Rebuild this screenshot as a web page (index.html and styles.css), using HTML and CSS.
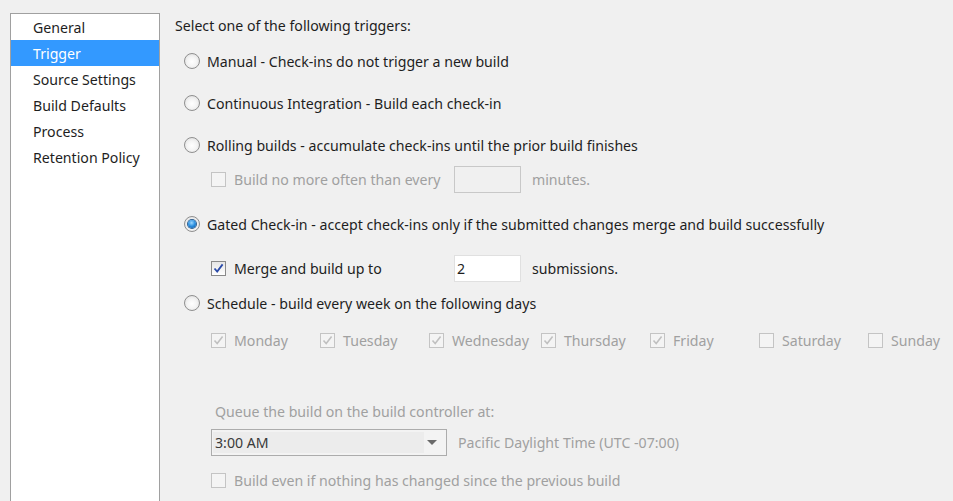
FILE: index.html
```html
<!DOCTYPE html>
<html>
<head>
<meta charset="utf-8">
<link rel="stylesheet" href="styles.css">
</head>
<body>
<div class="page">
  <nav class="nav">
    <div class="nav-item">General</div>
    <div class="nav-item selected">Trigger</div>
    <div class="nav-item">Source Settings</div>
    <div class="nav-item">Build Defaults</div>
    <div class="nav-item">Process</div>
    <div class="nav-item">Retention Policy</div>
  </nav>
  <main class="main">
    <div class="row heading">Select one of the following triggers:</div>

    <div class="row radio-row r1"><span class="radio"></span><span>Manual - Check-ins do not trigger a new build</span></div>
    <div class="row radio-row r2"><span class="radio"></span><span>Continuous Integration - Build each check-in</span></div>
    <div class="row radio-row r3"><span class="radio"></span><span>Rolling builds - accumulate check-ins until the prior build finishes</span></div>
    <div class="row sub-row s1 disabled">
      <span class="check"></span><span class="sub-label">Build no more often than every</span>
      <span class="textbox"></span><span class="after">minutes.</span>
    </div>

    <div class="row radio-row r4"><span class="radio on"></span><span>Gated Check-in - accept check-ins only if the submitted changes merge and build successfully</span></div>
    <div class="row sub-row s2">
      <span class="check checked"><svg viewBox="0 0 15 15" width="15" height="15"><path d="M3.5 7.5 L6.2 10.6 L11.6 3.4" fill="none" stroke="#2a4aa8" stroke-width="1.8"/></svg></span><span class="sub-label">Merge and build up to</span>
      <span class="textbox active">2</span><span class="after">submissions.</span>
    </div>

    <div class="row radio-row r5"><span class="radio"></span><span>Schedule - build every week on the following days</span></div>
    <div class="row days disabled">
      <div class="day"><span class="check"><svg viewBox="0 0 15 15" width="15" height="15"><path d="M3.5 7.5 L6.2 10.6 L11.6 3.4" fill="none" stroke="#c0c0c0" stroke-width="1.6"/></svg></span><span>Monday</span></div>
      <div class="day"><span class="check"><svg viewBox="0 0 15 15" width="15" height="15"><path d="M3.5 7.5 L6.2 10.6 L11.6 3.4" fill="none" stroke="#c0c0c0" stroke-width="1.6"/></svg></span><span>Tuesday</span></div>
      <div class="day"><span class="check"><svg viewBox="0 0 15 15" width="15" height="15"><path d="M3.5 7.5 L6.2 10.6 L11.6 3.4" fill="none" stroke="#c0c0c0" stroke-width="1.6"/></svg></span><span>Wednesday</span></div>
      <div class="day"><span class="check"><svg viewBox="0 0 15 15" width="15" height="15"><path d="M3.5 7.5 L6.2 10.6 L11.6 3.4" fill="none" stroke="#c0c0c0" stroke-width="1.6"/></svg></span><span>Thursday</span></div>
      <div class="day"><span class="check"><svg viewBox="0 0 15 15" width="15" height="15"><path d="M3.5 7.5 L6.2 10.6 L11.6 3.4" fill="none" stroke="#c0c0c0" stroke-width="1.6"/></svg></span><span>Friday</span></div>
      <div class="day"><span class="check"></span><span>Saturday</span></div>
      <div class="day"><span class="check"></span><span>Sunday</span></div>
    </div>

    <div class="row queue disabled">Queue the build on the build controller at:</div>
    <div class="row time-row disabled">
      <div class="combo"><span class="combo-text">3:00 AM</span><span class="combo-arrow"></span></div>
      <span class="tz">Pacific Daylight Time (UTC -07:00)</span>
    </div>
    <div class="row sub-row s3 disabled"><span class="check"></span><span>Build even if nothing has changed since the previous build</span></div>
  </main>
</div>
</body>
</html>
```

FILE: styles.css
```css
html, body {
  margin: 0;
  padding: 0;
  height: 100%;
  overflow: hidden;
}
body {
  background: #f0f0f0;
  font-family: "Noto Sans", "Open Sans", sans-serif;
  font-size: 14.15px;
  color: #1e1e1e;
}
.page {
  display: flex;
  height: 501px;
}
.nav {
  margin-left: 10px;
  margin-top: 13px;
  width: 148px;
  background: #fff;
  border: 1px solid #a0a0a0;
  border-bottom: none;
  flex: none;
}
.nav-item {
  height: 26px;
  line-height: 28px;
  overflow: hidden;
  padding-left: 22px;
  color: #1e1e1e;
}
.nav-item.selected {
  background: #3399ff;
  color: #fff;
}
.main {
  flex: 1;
  padding-left: 15px;
  padding-top: 15px;
  display: flex;
  flex-direction: column;
}
.row {
  display: flex;
  align-items: center;
  height: 20px;
  white-space: nowrap;
}
.disabled { color: #a0a0a0; }
.radio-row { padding-left: 9px; }
.radio {
  width: 14px;
  height: 14px;
  border: 1px solid #8f8f8f;
  border-radius: 50%;
  background: radial-gradient(circle at 50% 55%, #ffffff 0%, #f4f4f4 45%, #d8d8d8 100%);
  margin-right: 7px;
  position: relative;
  flex: none;
}
.radio.on::after {
  content: "";
  position: absolute;
  left: 3px;
  top: 3px;
  width: 8px;
  height: 8px;
  border-radius: 50%;
  background: radial-gradient(circle at 45% 35%, #9fd8ff 0%, #2a8fe0 50%, #0b4f98 100%);
  box-shadow: 0 0 0 1px #2d5f91;
}
.r1 { margin-top: 16px; }
.r2 { margin-top: 22px; }
.r3 { margin-top: 22px; }
.r4 { margin-top: 22px; }
.r5 { margin-top: 12px; }
.sub-row { padding-left: 36px; }
.s1 { margin-top: 11px; height: 26px; }
.s2 { margin-top: 21px; height: 26px; }
.s3 { margin-top: 14px; }
.check {
  width: 13px;
  height: 13px;
  border: 1px solid #8a8a8a;
  background: linear-gradient(#e6e6e6, #ffffff);
  margin-right: 8px;
  flex: none;
  position: relative;
  display: inline-flex;
}
.check svg { position: absolute; left: -1px; top: -1px; }
.disabled .check { border-color: #c4c4c4; background: #f4f4f4; }
.sub-label { width: 220px; }
.textbox {
  width: 63px;
  height: 25px;
  border: 1px solid #c8c8c8;
  background: #f0f0f0;
  box-sizing: content-box;
  padding-left: 2px;
  line-height: 25px;
  color: #1e1e1e;
}
.textbox.active { background: #fff; border-color: #e0e0e0; }
.after { margin-left: 11px; }
.days {
  margin-top: 17px;
  padding-left: 36px;
  display: grid;
  grid-template-columns: 109px 109px 112px 109px 109px 109px auto;
}
.day { display: flex; align-items: center; }
.queue { margin-top: 51px; padding-left: 40px; }
.time-row { margin-top: 8px; height: 27px; padding-left: 36px; }
.combo {
  width: 234px;
  height: 25px;
  border: 1px solid #acacac;
  background: #f3f3f3;
  display: flex;
  align-items: center;
  position: relative;
}
.combo-text {
  flex: 1;
  height: 21px;
  line-height: 21px;
  margin: 0 22px 0 1px;
  background: #ececec;
  color: #3a3a3a;
  padding-left: 2px;
}
.combo-arrow {
  position: absolute;
  right: 9px;
  top: 10px;
  width: 0;
  height: 0;
  border-left: 5px solid transparent;
  border-right: 5px solid transparent;
  border-top: 5px solid #6a6a6a;
}
.tz { margin-left: 11px; }
```
